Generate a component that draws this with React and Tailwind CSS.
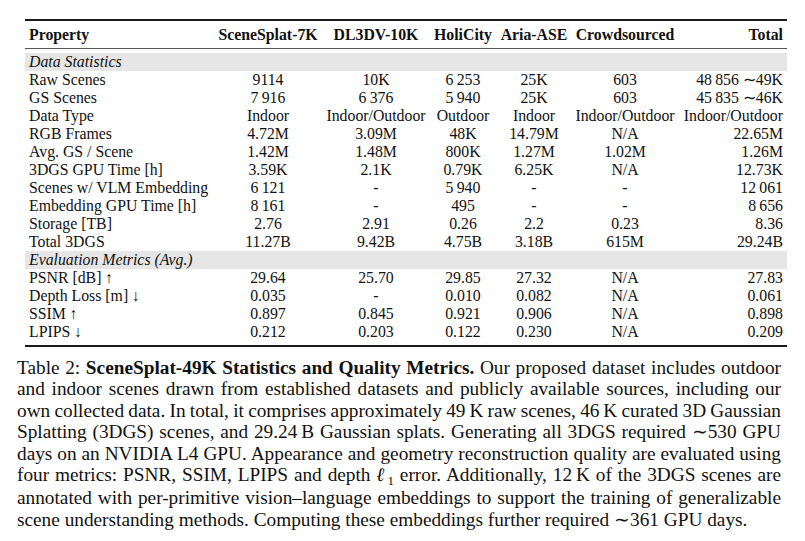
const T = "\u2009";

const statRows = [
  ["Raw Scenes", "9114", "10K", `6${T}253`, "25K", "603", `48${T}856 \u223C49K`],
  ["GS Scenes", `7${T}916`, `6${T}376`, `5${T}940`, "25K", "603", `45${T}835 \u223C46K`],
  ["Data Type", "Indoor", "Indoor/Outdoor", "Outdoor", "Indoor", "Indoor/Outdoor", "Indoor/Outdoor"],
  ["RGB Frames", "4.72M", "3.09M", "48K", "14.79M", "N/A", "22.65M"],
  ["Avg. GS / Scene", "1.42M", "1.48M", "800K", "1.27M", "1.02M", "1.26M"],
  ["3DGS GPU Time [h]", "3.59K", "2.1K", "0.79K", "6.25K", "N/A", "12.73K"],
  ["Scenes w/ VLM Embedding", `6${T}121`, "-", `5${T}940`, "-", "-", `12${T}061`],
  ["Embedding GPU Time [h]", `8${T}161`, "-", "495", "-", "-", `8${T}656`],
  ["Storage [TB]", "2.76", "2.91", "0.26", "2.2", "0.23", "8.36"],
  ["Total 3DGS", "11.27B", "9.42B", "4.75B", "3.18B", "615M", "29.24B"],
];

const evalRows = [
  ["PSNR [dB] \u2191", "29.64", "25.70", "29.85", "27.32", "N/A", "27.83"],
  ["Depth Loss [m] \u2193", "0.035", "-", "0.010", "0.082", "N/A", "0.061"],
  ["SSIM \u2191", "0.897", "0.845", "0.921", "0.906", "N/A", "0.898"],
  ["LPIPS \u2193", "0.212", "0.203", "0.122", "0.230", "N/A", "0.209"],
];

const headers = ["SceneSplat-7K", "DL3DV-10K", "HoliCity", "Aria-ASE", "Crowdsourced"];

function SectionRow({ label }) {
  return (
    <tr className="h-[18px]">
      <td colSpan={7} className="bg-[#e6e6e6] pl-[4px] italic">
        {label}
      </td>
    </tr>
  );
}

function DataRow({ row }) {
  return (
    <tr className="h-[18px]">
      <td className="pl-[4px] text-left">{row[0]}</td>
      {row.slice(1, 6).map((v, i) => (
        <td key={i} className="text-center">
          {v}
        </td>
      ))}
      <td className="pr-[4px] text-right">{row[6]}</td>
    </tr>
  );
}

// each caption line is justified on its own so the breaks match the paper
function Line({ children, last }) {
  return (
    <div
      className={
        last
          ? "text-left"
          : "text-justify [text-align-last:justify] [word-spacing:-2px]"
      }
    >
      {children}
    </div>
  );
}

export default function App() {
  return (
    <div className="w-[805px] h-[541px] overflow-hidden bg-white text-[#111] font-['Liberation_Serif',serif] pl-[17px] pt-[19px]">
      <div className="ml-[8px]">
        <table className="table-fixed w-[762px] border-collapse whitespace-nowrap text-[15.8px] leading-[18px]">
          <colgroup>
            <col className="w-[189px]" />
            <col className="w-[108px]" />
            <col className="w-[108px]" />
            <col className="w-[66px]" />
            <col className="w-[76px]" />
            <col className="w-[106px]" />
            <col className="w-[109px]" />
          </colgroup>
          <thead>
            <tr className="h-[28px] border-t-2 border-t-[#1a1a1a] border-b border-b-[#555]">
              <th className="pl-[4px] pt-[1px] text-left font-bold">Property</th>
              {headers.map((h) => (
                <th key={h} className="pt-[1px] text-center font-bold">
                  {h}
                </th>
              ))}
              <th className="pr-[4px] pt-[1px] text-right font-bold">Total</th>
            </tr>
          </thead>
          <tbody>
            <tr className="h-[5px]">
              <td colSpan={7} />
            </tr>
            <SectionRow label="Data Statistics" />
            {statRows.map((r) => (
              <DataRow key={r[0]} row={r} />
            ))}
            <SectionRow label="Evaluation Metrics (Avg.)" />
            {evalRows.map((r) => (
              <DataRow key={r[0]} row={r} />
            ))}
            <tr className="h-[5px] border-b-2 border-b-[#1a1a1a]">
              <td colSpan={7} />
            </tr>
          </tbody>
        </table>
      </div>

      <div className="mt-[10px] w-[764px] text-[19.3px] leading-[21.4px]">
        <Line>
          Table 2: <span className="font-bold">SceneSplat-49K Statistics and Quality Metrics.</span> Our proposed dataset includes outdoor
        </Line>
        <Line>and indoor scenes drawn from established datasets and publicly available sources, including our</Line>
        <Line>own collected data. In total, it comprises approximately 49{T}K raw scenes, 46{T}K curated 3D Gaussian</Line>
        <Line>Splatting (3DGS) scenes, and 29.24{T}B Gaussian splats. Generating all 3DGS required {"\u223C"}530 GPU</Line>
        <Line>days on an NVIDIA L4 GPU. Appearance and geometry reconstruction quality are evaluated using</Line>
        <Line>
          four metrics: PSNR, SSIM, LPIPS and depth <span className="italic">{"\u2113"}</span>
          <span className="relative top-[4px] text-[13px]">1</span> error. Additionally, 12{T}K of the 3DGS scenes are
        </Line>
        <Line>annotated with per-primitive vision{"\u2013"}language embeddings to support the training of generalizable</Line>
        <Line last>scene understanding methods. Computing these embeddings further required {"\u223C"}361 GPU days.</Line>
      </div>
    </div>
  );
}
